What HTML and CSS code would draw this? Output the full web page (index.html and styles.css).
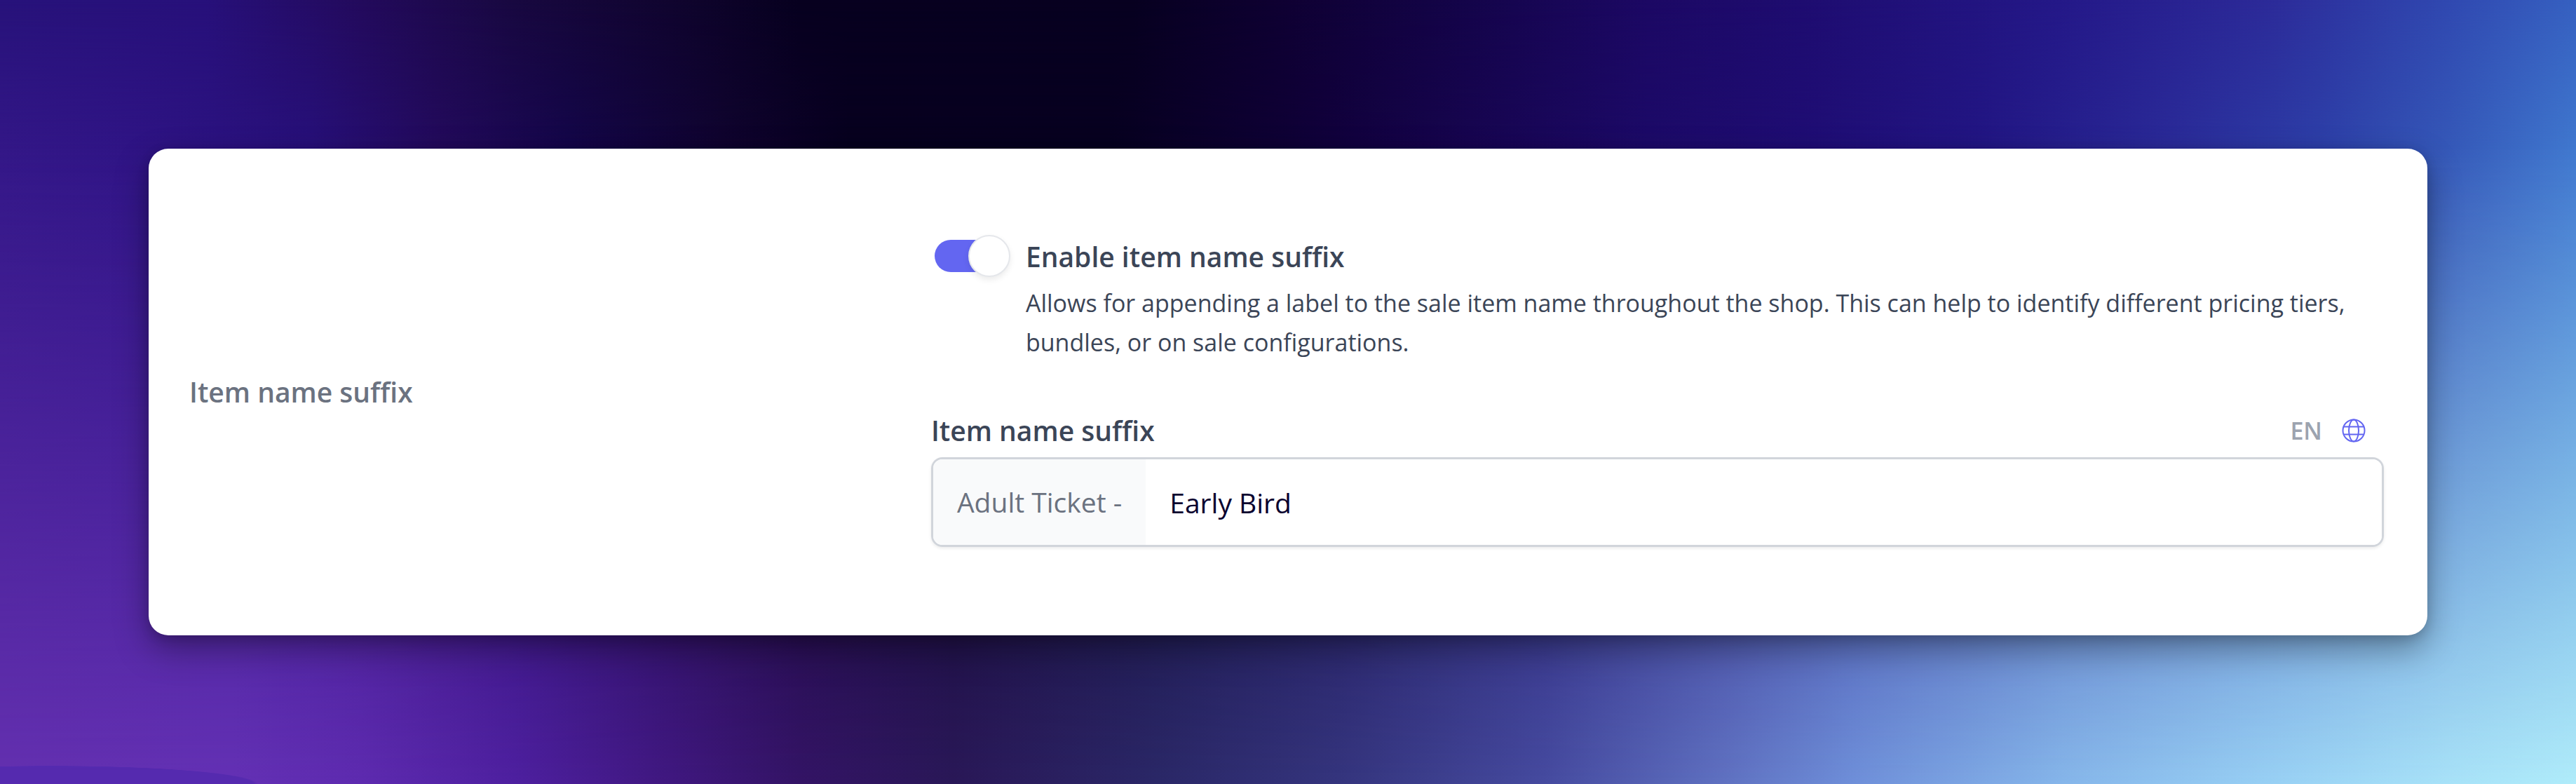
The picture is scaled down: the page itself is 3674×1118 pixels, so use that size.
FILE: index.html
```
<!DOCTYPE html>
<html lang="en">
<head>
    <meta charset="UTF-8">
    <meta name="viewport" content="width=device-width, initial-scale=1.0">
    <title>Item name suffix</title>
    <link rel="stylesheet" href="styles.css">
</head>
<body>
    <main class="card">
        <h2 class="section-title">Item name suffix</h2>
        <div class="settings">
            <div class="toggle-row">
                <input type="checkbox" role="switch" class="switch" id="enable-suffix" aria-describedby="suffix-help" checked>
                <div class="toggle-text">
                    <label for="enable-suffix" class="label">Enable item name suffix</label>
                    <p class="help" id="suffix-help">Allows for appending a label to the sale item name throughout the shop. This can help to identify different pricing tiers, bundles, or on sale configurations.</p>
                </div>
            </div>
            <div class="field">
                <div class="field-head">
                    <label for="suffix" class="label">Item name suffix</label>
                    <div class="locale">
                        <span class="lang">EN</span>
                        <button type="button" class="globe-btn" aria-label="Translations">
                            <svg class="globe" viewBox="0 0 34 34" fill="none" stroke="currentColor" stroke-width="2">
                                <circle cx="17" cy="17" r="15.5"/>
                                <ellipse cx="17" cy="17" rx="7" ry="15.5"/>
                                <path d="M2.5 11.5h29M2.5 22.5h29"/>
                            </svg>
                        </button>
                    </div>
                </div>
                <div class="input-group">
                    <span class="prefix">Adult Ticket -</span>
                    <input type="text" class="input" id="suffix" value="Early Bird">
                </div>
            </div>
        </div>
    </main>
</body>
</html>
```
FILE: styles.css
```
* {
    box-sizing: border-box;
}
/* backdrop: three horizontal gradients that fade into each other from top to bottom */
body {
    position: relative;
    margin: 0;
    min-height: 100vh;
    padding: 212px;
    font-family: "Open Sans", "Noto Sans", sans-serif;
    color: #3b4557;
    background:
        radial-gradient(ellipse 8% 26px at 2% 100%, #562bb0 98%, transparent 100%),
        linear-gradient(90deg, #6430b0 0%, #6431b5 9%, #5e2bb0 14%, #4e20a0 20%, #401880 26%, #341466 31%, #2a1858 37%, #2b2868 45%, #35357e 52%, #464ba0 60%, #6072c2 67%, #6f90da 72%, #86b6ea 80%, #98d0f4 88%, #a8e2f8 95%, #b0ecfa 100%);
}
body::before,
body::after {
    content: "";
    position: absolute;
    inset: 0;
}
body::before {
    background: linear-gradient(90deg, #331787 0%, #2f1485 5%, #27107a 12%, #230a5c 17%, #14064a 22%, #10042f 28%, #07001f 33%, #070020 43%, #0f0036 50%, #170550 57%, #1c0a68 64%, #1f0d74 70%, #221684 77%, #2a2a98 84%, #2d3fa8 90%, #3558b8 95%, #4078cf 100%);
    -webkit-mask-image: linear-gradient(#000 19%, transparent 100%);
    mask-image: linear-gradient(#000 19%, transparent 100%);
}
body::after {
    background: linear-gradient(90deg, #27127a 0%, #27107a 8%, #230a5c 14%, #180840 20%, #10042f 26%, #07001f 31%, #070020 44%, #0f0033 50%, #14044a 57%, #1c0864 64%, #1e0c70 70%, #241888 80%, #2c2a98 88%, #3048b0 95%, #3660c0 100%);
    -webkit-mask-image: linear-gradient(#000 0%, transparent 19%);
    mask-image: linear-gradient(#000 0%, transparent 19%);
}
.card {
    position: relative;
    z-index: 1;
    display: grid;
    grid-template-columns: 1fr 66.2%;
    align-items: center;
    padding: 126px 62px 126px 58px;
    background: #fff;
    border-radius: 28px;
    box-shadow: 0 20px 48px rgba(0, 0, 0, 0.35), 0 4px 16px rgba(0, 0, 0, 0.15);
}
.section-title {
    margin: 0;
    font-size: 39px;
    line-height: 56px;
    font-weight: 600;
    color: #6b7280;
}
.label {
    font-size: 39px;
    line-height: 56px;
    font-weight: 600;
}
.toggle-row {
    display: flex;
    gap: 22px;
    padding-left: 5px;
}
.switch {
    appearance: none;
    flex: none;
    display: flex;
    align-items: center;
    justify-content: flex-end;
    width: 108px;
    height: 46px;
    margin: 4px 0 0;
    border-radius: 23px;
    background: linear-gradient(to right, #6366f1 80%, transparent 80%);
}
.switch::before {
    content: "";
    width: 56px;
    height: 56px;
    border: 2px solid #e5e7eb;
    border-radius: 50%;
    background: #fff;
    box-shadow: 0 4px 8px rgba(0, 0, 0, 0.08);
}
.toggle-text {
    flex: 1;
}
.help {
    margin: 10px 0 0;
    font-size: 34px;
    line-height: 56px;
}
.field {
    margin-top: 70px;
}
.field-head {
    display: flex;
    justify-content: space-between;
    align-items: center;
    margin-bottom: 10px;
}
.locale {
    display: flex;
    align-items: center;
    gap: 28px;
    padding-right: 26px;
}
.lang {
    font-size: 34px;
    font-weight: 600;
    line-height: 56px;
    color: #9ca3af;
}
.globe-btn {
    display: flex;
    padding: 0;
    border: 0;
    background: none;
    color: #6366f1;
}
.globe {
    width: 34px;
    height: 34px;
}
.input-group {
    display: flex;
    height: 128px;
    border: 3px solid #d1d5db;
    border-radius: 16px;
    overflow: hidden;
    box-shadow: 0 2px 4px rgba(0, 0, 0, 0.08);
}
.prefix {
    padding: 0 34px;
    font-size: 39px;
    line-height: 122px;
    color: #6b7280;
    background: #f9fafb;
}
.input {
    flex: 1;
    min-width: 0;
    padding: 0 34px;
    border: 0;
    outline: none;
    font: inherit;
    font-size: 39px;
    color: #08002e;
    background: #fff;
}
```
